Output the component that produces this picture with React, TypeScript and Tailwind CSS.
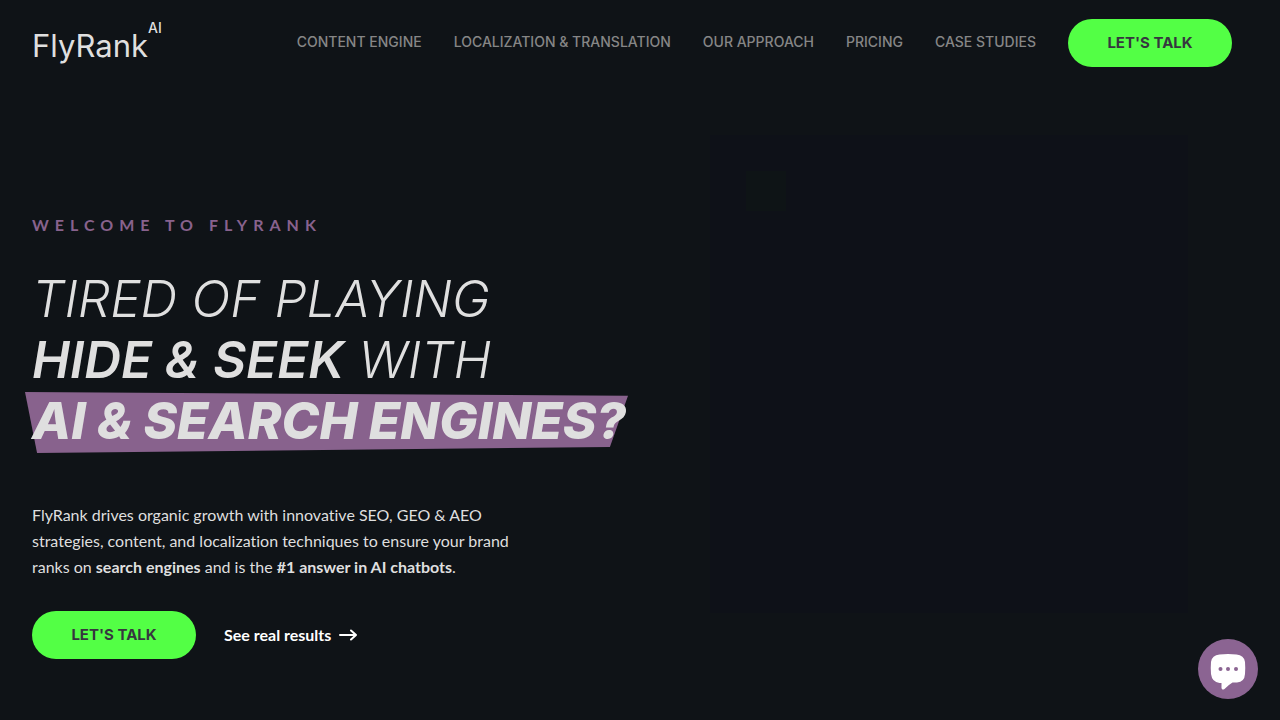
import React from 'react';

const links = [
  { label: "Content Engine", href: "#content-engine" },
  { label: "Localization & Translation", href: "#localization" },
  { label: "Our Approach", href: "#approach" },
  { label: "Pricing", href: "#pricing" },
  { label: "Case Studies", href: "#case-studies" },
];

const TalkButton: React.FC = () => (
  <button className="h-12 w-41 shrink-0 rounded-full bg-[#53ff45] font-[Inter,sans-serif] text-[15px] font-bold uppercase text-[#36363f]">
    Let's Talk
  </button>
);

const Logo: React.FC = () => (
  <a href="#top" className="flex items-start font-[Inter,sans-serif] text-[#dfdfdf]">
    <span className="pt-1.5 text-[31px] leading-10">FlyRank</span>
    <span className="text-sm leading-4 font-medium">AI</span>
  </a>
);

const Header: React.FC = () => (
  <header className="flex items-center justify-between pt-[19px] pr-12 pl-8">
    <Logo />
    <nav className="flex items-center gap-8">
      {links.map((link) => (
        <a
          key={link.href}
          href={link.href}
          className="whitespace-nowrap pb-0.5 font-[Inter,sans-serif] text-sm font-medium uppercase text-[#868686]"
        >
          {link.label}
        </a>
      ))}
      <TalkButton />
    </nav>
  </header>
);

const Hero: React.FC = () => (
  <main className="grid grid-cols-2 pl-8">
    <div className="pt-[148px]">
      <p className="font-[Lato,sans-serif] text-base leading-5 font-bold tracking-[6px] uppercase text-[#88628d]">
        Welcome to FlyRank
      </p>

      <h1 className="mt-[33px] whitespace-nowrap font-[Inter,sans-serif] text-[51px] leading-[61px] font-light italic uppercase text-[#dfdfdf]">
        Tired of playing
        <br />
        <strong className="font-semibold">Hide & Seek</strong> with
        <br />
        <span className="relative isolate inline-block font-extrabold">
          {/* Slanted highlight behind the last line */}
          <span className="absolute top-0.5 -right-0.5 -bottom-0.5 -left-[7px] -z-10 bg-[#88628d] [clip-path:polygon(0_0,100%_6%,97%_90%,2%_100%)]" />
          AI & Search Engines?
        </span>
      </h1>

      <p className="mt-[51px] max-w-[500px] font-[Lato,sans-serif] text-base leading-[26px] text-[#dfdfdf] [font-variant-ligatures:none]">
        FlyRank drives organic growth with innovative SEO, GEO & AEO strategies, content, and
        localization techniques to ensure your brand ranks on <strong>search engines</strong> and is
        the <strong>#1 answer in AI chatbots</strong>.
      </p>

      <div className="mt-[31px] flex items-center gap-7">
        <TalkButton />
        <a href="#results" className="flex items-center gap-2 font-[Lato,sans-serif] text-base font-bold text-white">
          See real results
          <svg className="h-3 w-[18px]" viewBox="0 0 18 12" fill="none" stroke="currentColor" strokeWidth="2" strokeLinecap="round" strokeLinejoin="round">
            <path d="M1 6h16M12 1.500l5 4.500-5 4.500" />
          </svg>
        </a>
      </div>
    </div>

    {/* Dark stage on the right */}
    <div className="pt-[68px] pr-[92px] pl-[54px]">
      <div className="aspect-square bg-[#0e1118] p-9">
        <div className="size-10 bg-[#0e1416]" />
      </div>
    </div>
  </main>
);

const ChatButton: React.FC = () => (
  <button
    aria-label="Open chat"
    className="fixed right-[22px] bottom-[21px] flex size-15 items-center justify-center rounded-full bg-[#8b6492]"
  >
    <svg className="size-9" viewBox="0 0 36 36" overflow="visible">
      <path
        d="M9.500 3.500Q18 2.500 26.500 3.500Q34 4 35 11Q35.500 17 35 23Q34.500 31 27 31.500H22.500Q19 33.500 14.500 38Q12 39.500 11.500 37V32H9.500Q2 31 1 23Q.5 17 1 11Q2 4 9.500 3.500Z"
        fill="#fff"
      />
      <g fill="#8b6492">
        <circle cx="10.500" cy="18" r="2" />
        <circle cx="18" cy="18" r="2" />
        <circle cx="26" cy="18" r="2" />
      </g>
    </svg>
  </button>
);

export default function App() {
  return (
    <div id="top" className="min-h-screen overflow-x-hidden bg-[#0f1317]">
      <Header />
      <Hero />
      <ChatButton />
    </div>
  );
}
